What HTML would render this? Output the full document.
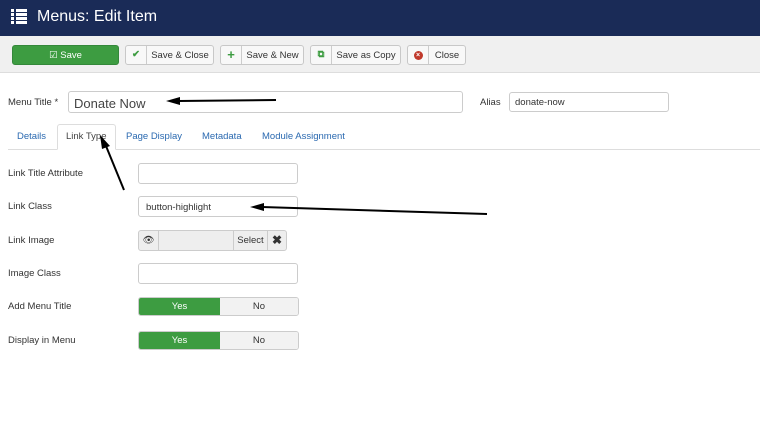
<!DOCTYPE html>
<html><head><style>
*{box-sizing:border-box;margin:0;padding:0}
body{width:760px;height:444px;overflow:hidden;background:#fff;font-family:"Liberation Sans",sans-serif;font-size:9.5px;color:#333;position:relative}
.hdr{position:absolute;left:0;top:0;width:760px;height:36px;background:#1a2b57;color:#fff;font-size:16px}
.hdr span{position:absolute;left:37px;top:8px}
.tb{position:absolute;left:0;top:36px;width:760px;height:37px;background:#f0f0f0;border-bottom:1px solid #ddd}
.b{position:absolute;top:9px;height:20px;border:1px solid #c8c8c8;background:#f8f8f8;border-radius:3px;display:flex;align-items:center}
.b i{display:block;height:100%;width:21px;border-right:1px solid #ccc;text-align:center;line-height:18px;font-style:normal;font-weight:bold}
.b em{font-style:normal;flex:1;text-align:center}
.ab{position:absolute}
.in{position:absolute;border:1px solid #ccc;border-radius:3px;background:#fff;height:21px}
.tog{position:absolute;left:138px;width:161px;height:19px;border:1px solid #ccc;border-radius:3px;display:flex;overflow:hidden}
.tog div{width:81px;text-align:center;line-height:17px}
.tog .y{background:#3d9c41;color:#fff}
.tog .n{background:#f2f2f2;flex:1}
.tab{position:absolute;top:131px;color:#2a69b0}
</style></head><body>
<div class="hdr">
<svg style="position:absolute;left:11px;top:9px" width="16" height="15"><g fill="#fff"><rect x="0" y="0" width="3" height="3"/><rect x="5" y="0" width="11" height="3"/><rect x="0" y="4" width="3" height="3"/><rect x="5" y="4" width="11" height="3"/><rect x="0" y="8" width="3" height="3"/><rect x="5" y="8" width="11" height="3"/><rect x="0" y="12" width="3" height="3"/><rect x="5" y="12" width="11" height="3"/></g></svg>
<span>Menus: Edit Item</span></div>
<div class="tb">
<div class="b" style="left:12px;width:107px;background:#3d9c41;border-color:#34883a;color:#fff;justify-content:center">☑ Save</div>
<div class="b" style="left:125px;width:89px"><i style="color:#3d9c41">✔</i><em>Save &amp; Close</em></div>
<div class="b" style="left:220px;width:84px"><i style="color:#3d9c41;font-size:13px">+</i><em>Save &amp; New</em></div>
<div class="b" style="left:310px;width:91px"><i style="color:#3d9c41">⧉</i><em>Save as Copy</em></div>
<div class="b" style="left:407px;width:59px"><i><span style="display:inline-block;width:9px;height:9px;border-radius:50%;background:#c0392b;color:#fff;font-size:7px;line-height:9px;margin-top:4px">×</span></i><em>Close</em></div>
</div>
<div class="ab" style="left:8px;top:97px">Menu Title *</div>
<div class="in" style="left:68px;top:91px;width:395px;height:22px;font-size:13px;padding:4px 5px;color:#444">Donate Now</div>
<div class="ab" style="left:480px;top:97px">Alias</div>
<div class="in" style="left:509px;top:92px;width:160px;height:20px;padding:4px 5px">donate-now</div>
<div style="position:absolute;left:8px;top:149px;width:752px;border-top:1px solid #ddd"></div>
<div style="position:absolute;left:57px;top:124px;width:59px;height:26px;border:1px solid #ddd;border-bottom:1px solid #fff;border-radius:3px 3px 0 0;background:#fff"></div>
<div class="tab" style="left:17px">Details</div>
<div class="tab" style="left:66px;color:#444">Link Type</div>
<div class="tab" style="left:126px">Page Display</div>
<div class="tab" style="left:202px">Metadata</div>
<div class="tab" style="left:262px">Module Assignment</div>
<div class="ab" style="left:8px;top:168px">Link Title Attribute</div>
<div class="in" style="left:138px;top:163px;width:160px"></div>
<div class="ab" style="left:8px;top:201px">Link Class</div>
<div class="in" style="left:138px;top:196px;width:160px;padding:5px 7px">button-highlight</div>
<div class="ab" style="left:8px;top:235px">Link Image</div>
<div class="in" style="left:138px;top:230px;width:149px;background:#eee;display:flex">
<div style="width:20px;border-right:1px solid #ccc;text-align:center;line-height:19px">👁</div><div style="flex:1"></div>
<div style="width:34px;border-left:1px solid #ccc;text-align:center;line-height:19px">Select</div>
<div style="width:19px;border-left:1px solid #ccc;text-align:center;line-height:19px;font-weight:bold;font-size:12px">✖</div></div>
<div class="ab" style="left:8px;top:268px">Image Class</div>
<div class="in" style="left:138px;top:263px;width:160px"></div>
<div class="ab" style="left:8px;top:301px">Add Menu Title</div>
<div class="tog" style="top:297px"><div class="y">Yes</div><div class="n">No</div></div>
<div class="ab" style="left:8px;top:335px">Display in Menu</div>
<div class="tog" style="top:331px"><div class="y">Yes</div><div class="n">No</div></div>
<svg style="position:absolute;left:0;top:0" width="760" height="444">
<g stroke="#000" stroke-width="2" fill="#000">
<line x1="276" y1="100" x2="178" y2="101"/><polygon points="166,101 180,97 180,105" stroke="none"/>
<line x1="124" y1="190" x2="106" y2="146"/><polygon points="100,135 110,146 102,149" stroke="none"/>
<line x1="487" y1="214" x2="262" y2="207"/><polygon points="250,207 264,203 264,211" stroke="none"/>
</g></svg>
</body></html>
